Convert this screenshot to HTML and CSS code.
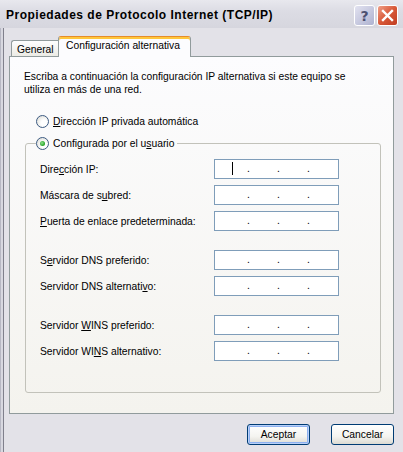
FILE: index.html
```html
<!DOCTYPE html>
<html lang="es">
<head>
  <meta charset="UTF-8">
  <title>Propiedades de Protocolo Internet (TCP/IP)</title>
  <link rel="stylesheet" href="styles.css">
</head>
<body>
  <div class="window">
    <div class="titlebar">
      <span class="title">Propiedades de Protocolo Internet (TCP/IP)</span>
      <div class="caption-btns">
        <span class="cbtn help">?</span>
        <span class="cbtn close">
          <svg width="13" height="13" viewBox="0 0 13 13"><path d="M2 2 L11 11 M11 2 L2 11" stroke="#fff" stroke-width="2.4" stroke-linecap="square"/></svg>
        </span>
      </div>
    </div>

    <div class="client">
      <div class="tabs">
        <div class="tab">General</div>
        <div class="tab active">Configuración alternativa</div>
      </div>

      <div class="panel">
        <p class="intro">Escriba a continuación la configuración IP alternativa si este equipo se utiliza en más de una red.</p>

        <label class="radio first"><span class="circle"></span><span><u>D</u>irección IP privada automática</span></label>

        <fieldset class="group">
          <legend><label class="radio"><span class="circle checked"></span><span>Configurada por el u<u>s</u>uario</span></label></legend>

          <div class="fields">
            <span>Dire<u>c</u>ción IP:</span>
            <div class="ip"><span class="oct"><span class="caret"></span></span><span class="sep">.</span><span class="oct"></span><span class="sep">.</span><span class="oct"></span><span class="sep">.</span><span class="oct"></span></div>
            <span>Máscara de s<u>u</u>bred:</span>
            <div class="ip"><span class="oct"></span><span class="sep">.</span><span class="oct"></span><span class="sep">.</span><span class="oct"></span><span class="sep">.</span><span class="oct"></span></div>
            <span><u>P</u>uerta de enlace predeterminada:</span>
            <div class="ip"><span class="oct"></span><span class="sep">.</span><span class="oct"></span><span class="sep">.</span><span class="oct"></span><span class="sep">.</span><span class="oct"></span></div>
          </div>

          <div class="fields spaced">
            <span>S<u>e</u>rvidor DNS preferido:</span>
            <div class="ip"><span class="oct"></span><span class="sep">.</span><span class="oct"></span><span class="sep">.</span><span class="oct"></span><span class="sep">.</span><span class="oct"></span></div>
            <span>Servidor DNS alternati<u>v</u>o:</span>
            <div class="ip"><span class="oct"></span><span class="sep">.</span><span class="oct"></span><span class="sep">.</span><span class="oct"></span><span class="sep">.</span><span class="oct"></span></div>
          </div>

          <div class="fields spaced">
            <span>Servidor <u>W</u>INS preferido:</span>
            <div class="ip"><span class="oct"></span><span class="sep">.</span><span class="oct"></span><span class="sep">.</span><span class="oct"></span><span class="sep">.</span><span class="oct"></span></div>
            <span>Servidor WI<u>N</u>S alternativo:</span>
            <div class="ip"><span class="oct"></span><span class="sep">.</span><span class="oct"></span><span class="sep">.</span><span class="oct"></span><span class="sep">.</span><span class="oct"></span></div>
          </div>
        </fieldset>
      </div>

      <div class="actions">
        <button class="btn default">Aceptar</button>
        <button class="btn">Cancelar</button>
      </div>
    </div>
  </div>
</body>
</html>
```

FILE: styles.css
```css
/* Fenêtre de dialogue */
body {
  margin: 0;
  background: #e3e2e8;
  font-family: 'Liberation Sans', Arial, sans-serif;
  font-size: 10.3px;
  color: #000;
}

.window {
  width: 403px;
  height: 452px;
  background: #e3e2e8;
  box-shadow: inset 1px 0 0 #b8b8c4, inset 3px 0 0 #d8d8e0, inset 4px 0 0 #80808c;
  overflow: hidden;
}

/* Barre de titre */
.titlebar {
  height: 28px;
  display: flex;
  align-items: center;
  justify-content: space-between;
  padding: 0 5px 0 6px;
  background: linear-gradient(#e8e8ee, #dcdce4 40%, #d6d6de);
  box-sizing: border-box;
}

.title {
  font-weight: bold;
  font-size: 12px;
  letter-spacing: 0.5px;
  color: #000;
  margin-top: 2px;
}

.caption-btns {
  display: flex;
  gap: 2px;
  margin-top: 3px;
}

.cbtn {
  width: 21px;
  height: 21px;
  box-sizing: border-box;
  border: 1px solid #fff;
  border-radius: 3px;
  display: flex;
  align-items: center;
  justify-content: center;
}

.help {
  background: linear-gradient(135deg, #e2e2f0, #aeb2d0);
  color: #4c5070;
  font-weight: bold;
  font-size: 14px;
  font-family: 'DejaVu Sans', sans-serif;
}

.close {
  background: linear-gradient(135deg, #f0a088, #d85838 50%, #c03c20);
}

/* Zone client */
.client {
  padding: 8px 9px 0 9px;
}

.tabs {
  height: 20px;
  display: flex;
  align-items: flex-end;
}

.tab {
  box-sizing: border-box;
  height: 16px;
  line-height: 13px;
  padding: 2px 0 0 5px;
  margin-left: 2px;
  width: 47px;
  border: 1px solid #919b9c;
  border-bottom: none;
  border-right: none;
  border-radius: 3px 0 0 0;
  background: linear-gradient(#fefefe, #ecebe5);
}

.tab.active {
  position: relative;
  z-index: 1;
  height: 21px;
  width: 133px;
  margin: 0 0 -1px 0;
  padding: 2px 0 0 7px;
  border-right: 1px solid #919b9c;
  border-top: 1px solid #e68b2c;
  border-radius: 3px 3px 0 0;
  box-shadow: inset 0 2px 0 #ffc73c;
  background: #fcfcfe;
}

.panel {
  border: 1px solid #919b9c;
  background: linear-gradient(#fcfcfe, #f4f3ee);
  padding: 13px 14px 20px 14px;
  height: 358px;
  box-sizing: border-box;
}

.intro {
  margin: 0;
  line-height: 13px;
  width: 336px;
}

.radio {
  display: flex;
  align-items: center;
  gap: 4px;
  height: 13px;
  line-height: 13px;
  white-space: nowrap;
}

.radio.first {
  margin: 19px 0 0 12px;
}

.circle {
  width: 13px;
  height: 13px;
  box-sizing: border-box;
  border-radius: 50%;
  border: 1px solid #3c5a82;
  background: radial-gradient(circle at 65% 65%, #ffffff 30%, #dcdcd6 90%);
  display: flex;
  align-items: center;
  justify-content: center;
}

.circle.checked::after {
  content: '';
  width: 5px;
  height: 5px;
  border-radius: 50%;
  background: radial-gradient(circle at 40% 40%, #8ee08e, #21a121 70%);
}

/* Groupe */
.group {
  margin: 9px 0 0 1px;
  width: 356px;
  box-sizing: border-box;
  border: 1px solid #c2c2ba;
  border-radius: 3px;
  padding: 9px 0 31px 10px;
  min-inline-size: 0;
}

.group legend {
  padding: 0 3px 0 0;
}

.fields {
  display: grid;
  grid-template-columns: 174px 125px;
  row-gap: 6px;
  align-items: center;
  margin-left: 4px;
}

.fields.spaced {
  margin-top: 19px;
}

.ip {
  height: 20px;
  box-sizing: border-box;
  border: 1px solid #7f9db9;
  background: #fff;
  display: flex;
  padding-left: 4px;
  line-height: 18px;
}

.oct {
  width: 28px;
}

.sep {
  width: 2px;
}

.caret {
  display: inline-block;
  width: 1px;
  height: 13px;
  background: #000;
  margin: 2px 0 0 13px;
  vertical-align: top;
}

/* Boutons */
.actions {
  display: flex;
  justify-content: flex-end;
  gap: 21px;
  margin-top: 10px;
}

.btn {
  width: 63px;
  height: 21px;
  padding: 0;
  font-family: 'Liberation Sans', Arial, sans-serif;
  font-size: 10.3px;
  color: #000;
  border: 1px solid #003c74;
  border-radius: 3px;
  background: linear-gradient(#ffffff, #f4f4f0 60%, #dcdad2);
}

.btn.default {
  box-shadow: inset 0 0 0 1px #b8d0f8, inset 0 0 0 2px #8cb0f0;
}
```
